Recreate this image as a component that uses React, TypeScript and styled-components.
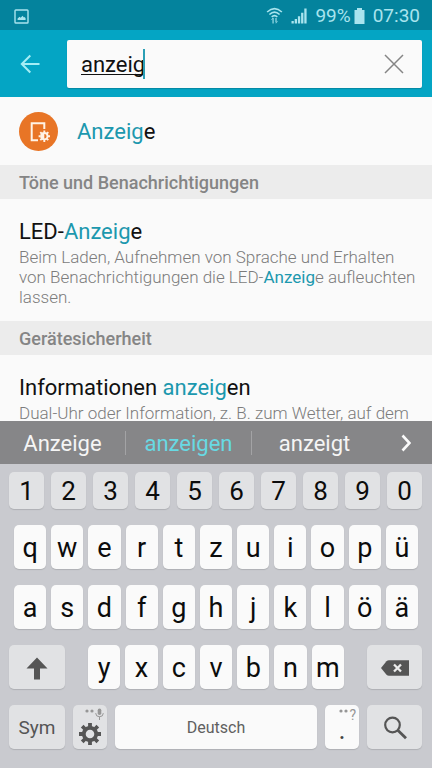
import React, { useRef, useState } from "react";
import styled, { createGlobalStyle, css } from "styled-components";

const GlobalStyle = createGlobalStyle`
  *, *::before, *::after { box-sizing: border-box; }
  body {
    margin: 0;
    background: #fafafa;
    font-family: Roboto, "Noto Sans", sans-serif;
  }
  button, input { font: inherit; color: inherit; }
`;

const Screen = styled.div`
  display: flex;
  flex-direction: column;
  height: 100vh;
  overflow: hidden;
`;

const StatusBar = styled.header`
  flex: none;
  display: flex;
  align-items: center;
  height: 30px;
  padding: 2px 12px 0 14px;
  background: #04839d;
  color: #a9e4ee;
  font-size: 19px;
  line-height: 28px;
  svg { display: block; }
`;

const StatusItems = styled.div`
  display: flex;
  align-items: center;
  gap: 8px;
  margin-left: auto;
`;

const Battery = styled.span`
  display: flex;
  align-items: center;
  gap: 3px;
`;

const Toolbar = styled.form`
  flex: none;
  display: flex;
  align-items: center;
  height: 67px;
  padding: 0 10px 0 0;
  background: #04a5c4;
`;

const IconButton = styled.button<{ $width: number }>`
  flex: none;
  display: flex;
  align-items: center;
  justify-content: center;
  width: ${(p) => p.$width}px;
  height: 43px;
  padding: 0;
  border: 0;
  background: none;
  cursor: pointer;
`;

const BackButton = styled(IconButton)`
  padding-right: 8px;
`;

const SearchField = styled.label`
  flex: 1;
  min-width: 0;
  display: flex;
  align-items: center;
  height: 48px;
  padding-left: 14px;
  border-radius: 2px;
  background: #fafafa;
  box-shadow: 0 1px 1px #0488a2;
  cursor: text;
`;

const SearchInput = styled.input`
  field-sizing: content;
  min-width: 1px;
  max-width: 280px;
  height: 32px;
  padding: 2px 0 0;
  border: 0;
  outline: 0;
  background: none;
  color: #111;
  caret-color: transparent;
  font-size: 22px;
  text-decoration: underline;
  text-decoration-thickness: 1px;
  text-underline-offset: 2px;
  text-decoration-skip-ink: none;
`;

const Caret = styled.span`
  flex: none;
  width: 2px;
  height: 30px;
  margin-left: -2px;
  background: #2b9fb5;
`;

const ClearSlot = styled.span`
  margin-left: auto;
`;

const Results = styled.main`
  flex: 1;
  min-height: 0;
  overflow: hidden;
  background: #fafafa;
`;

const CategoryRow = styled.a`
  display: flex;
  align-items: center;
  gap: 19px;
  height: 68px;
  padding: 0 19px;
  color: #111;
  font-size: 22px;
  text-decoration: none;
`;

const SectionTitle = styled.h2`
  margin: 0;
  height: 34px;
  padding: 0 19px;
  background: #ececec;
  color: #858585;
  font-size: 18px;
  font-weight: 500;
  line-height: 35px;
`;

const SettingRow = styled.a`
  display: block;
  padding: 17px 12px 14px 19px;
  color: #111;
  text-decoration: none;
`;

const SettingName = styled.span`
  display: block;
  font-size: 22px;
  line-height: 31px;
`;

const SettingText = styled.span`
  display: block;
  color: #7c7c7c;
  font-size: 17px;
  font-weight: 300;
  line-height: 20px;
`;

const Hit = styled.mark`
  background: none;
  color: #1c98ae;
  ${SettingText} & { font-weight: 400; }
`;

const Suggestions = styled.div`
  flex: none;
  display: flex;
  align-items: center;
  height: 43px;
  background: #868688;
`;

const Suggestion = styled.button<{ $active?: boolean }>`
  flex: 1;
  height: 24px;
  padding: 2px 0 0;
  border: 0;
  border-left: 1px solid #a3a3a5;
  background: none;
  color: ${(p) => (p.$active ? "#68d9e3" : "#f5f5f5")};
  font-size: 22px;
  line-height: 22px;
  cursor: pointer;
  &:first-child { border-left: 0; }
`;

const Keyboard = styled.section`
  flex: none;
  display: flex;
  flex-direction: column;
  gap: 16px;
  padding: 8px 10px 19px 9px;
  background: #c9cacf;
`;

const NumberRow = styled.div`
  display: grid;
  grid-template-columns: repeat(10, 1fr);
  gap: 7px;
`;

const LetterRow = styled.div`
  display: grid;
  grid-template-columns: repeat(11, 1fr);
  gap: 5px;
  padding: 0 4px 0 5px;
`;

const ShiftRow = styled.div`
  display: grid;
  grid-template-columns: 56px 1fr 55px;
  gap: 23px;
`;

const ShiftLetters = styled.div`
  display: grid;
  grid-template-columns: repeat(7, 1fr);
  gap: 5px;
`;

const BottomRow = styled.div`
  display: grid;
  grid-template-columns: 56px 34px 1fr 34px 55px;
  gap: 8px;
`;

const Key = styled.button<{ $kind?: "letter" | "number" | "function" | "label" }>`
  display: flex;
  align-items: center;
  justify-content: center;
  height: 44px;
  min-width: 0;
  padding: 2px 0 0;
  border: 0;
  border-radius: 5px;
  background: #fafafa;
  box-shadow: 0 1px 1px #afb0b4;
  color: #0c0c0c;
  font-size: 27px;
  line-height: 32px;
  cursor: pointer;
  ${(p) => p.$kind === "number" && css`
    height: 37px;
    padding: 0;
    background: #e1e2e4;
    font-size: 26px;
  `}
  ${(p) => p.$kind === "function" && css`
    background: #e1e2e4;
    color: #555;
    font-size: 19px;
  `}
  ${(p) => p.$kind === "label" && css`
    color: #606060;
    font-size: 16px;
  `}
`;

const CornerKey = styled(Key)`
  flex-direction: column;
  justify-content: space-between;
  align-items: stretch;
  padding: 3px 3px 4px;
  svg { display: block; }
`;

const CornerHint = styled.span`
  display: flex;
  justify-content: flex-end;
  gap: 1px;
  height: 13px;
  color: #969696;
  font-size: 14px;
  line-height: 15px;
`;

const CornerMain = styled.span`
  display: flex;
  justify-content: center;
  color: #444;
`;

const CornerSign = styled(CornerMain)`
  padding-bottom: 6px;
  font-size: 27px;
  line-height: 18px;
`;

const ArrowLeft = () => (
  <svg width="20" height="20" viewBox="0 0 20 20" fill="none" stroke="#a5edf5" strokeWidth="2">
    <path d="M19.5 10H2M10.3 1.5L1.8 10l8.5 8.5" />
  </svg>
);

const Cross = () => (
  <svg width="20" height="20" viewBox="0 0 20 20" fill="none" stroke="#858585" strokeWidth="1.5">
    <path d="M1 1l18 18M19 1L1 19" />
  </svg>
);

const PictureIcon = () => (
  <svg width="15" height="15" viewBox="0 0 15 15">
    <rect x="1" y="1" width="13" height="13" rx="0.8" fill="none" stroke="#a9e4ee" strokeWidth="1.4" />
    <path d="M3.6 11V9.4l2-1.6 1 .9 2-2 1.3 1.8.8-.5.9 1.2V11z" fill="#a9e4ee" />
  </svg>
);

const WifiIcon = () => (
  <svg width="17" height="18" viewBox="0 0 18 18" fill="none" stroke="#a9e4ee" strokeWidth="1.7">
    <path d="M1.2 4.8Q9-2.4 16.8 4.8M3.6 7.4Q9 2.4 14.4 7.4M6 10Q9 7.3 12 10" />
    <path d="M7.5 11v6M10.6 11v5" strokeWidth="1.8" opacity="0.65" />
    <path d="M5.7 13.2l1.8-2.2M12.3 14.2L10.6 16.8" strokeWidth="1" opacity="0.65" />
  </svg>
);

const SignalIcon = () => (
  <svg width="16" height="16" viewBox="0 0 16 16" fill="#a9e4ee">
    <path d="M0.5 13h2.3v2.5h-2.3zM3.7 11h2.3v4.500h-2.300zM6.900 8.200h2.300v7.300h-2.300zM10.100 4.700h2.300v10.800h-2.300zM13.300 0.500h2.300v15h-2.300z" />
  </svg>
);

const BatteryIcon = () => (
  <svg width="11" height="16" viewBox="0 0 11 16" fill="#a9e4ee">
    <path d="M3 0h5v2h2.500v14H0.500V2H3z" />
  </svg>
);

const DisplayIcon = () => (
  <svg width="39" height="39" viewBox="0 0 39 39">
    <circle cx="19.500" cy="19.500" r="19.500" fill="#e87526" />
    <path d="M25.300 17V11.200H12.700V28.300H19" fill="none" stroke="#fff3e6" strokeWidth="2" />
    <g fill="none" stroke="#fff3e6">
      <circle cx="25.300" cy="24.200" r="3.200" strokeWidth="1.800" />
      <path
        d="M25.300 18.500v2M25.300 28v2M19.600 24.200h2M29 24.200h2M21.300 20.200l1.400 1.400M27.900 26.800l1.400 1.400M21.300 28.200l1.400-1.400M27.900 21.600l1.400-1.400"
        strokeWidth="1.900"
      />
    </g>
    <path d="M25.300 21v6.400a3.200 3.200 0 0 1 0-6.400z" fill="#fff3e6" />
  </svg>
);

const ChevronRight = () => (
  <svg width="12" height="18" viewBox="0 0 12 18" fill="none" stroke="#fafafa" strokeWidth="2.600">
    <path d="M3.500 1.500L10.500 9l-7 7.500" />
  </svg>
);

const ShiftIcon = () => (
  <svg width="22" height="23" viewBox="0 0 22 23" fill="#555">
    <path d="M11 0.500L21.500 11.500H14V22.500H8V11.500H0.500z" />
  </svg>
);

const BackspaceIcon = () => (
  <svg width="28" height="16" viewBox="0 0 28 16">
    <path d="M0 8L5.500 1.300Q6.500 0.300 8 0.300H28V15.700H8Q6.500 15.700 5.500 14.700z" fill="#555" />
    <path d="M13 4.500l7 7M20 4.500l-7 7" stroke="#ececec" strokeWidth="2.300" fill="none" />
  </svg>
);

const GearIcon = () => (
  <svg width="22" height="22" viewBox="0 0 22 22">
    <g fill="none" stroke="#555">
      <circle cx="11" cy="11" r="6.200" strokeWidth="3.800" />
      <path
        d="M11 0v4M11 18v4M0 11h4M18 11h4M3.200 3.200L6 6M16 16l2.800 2.800M3.200 18.800L6 16M16 6l2.800-2.800"
        strokeWidth="3.800"
      />
    </g>
  </svg>
);

const DotsIcon = () => (
  <svg width="9" height="6" viewBox="0 0 9 6" fill="#969696">
    <circle cx="2" cy="3" r="1.600" />
    <circle cx="7" cy="3" r="1.600" />
  </svg>
);

const MicIcon = () => (
  <svg width="9" height="12" viewBox="0 0 9 12" fill="none" stroke="#969696">
    <rect x="2.700" y="0.500" width="3.600" height="6.500" rx="1.800" fill="#969696" stroke="none" />
    <path d="M0.800 5v.5a3.700 3.200 0 0 0 7.400 0V5M4.500 8.700V12" />
  </svg>
);

const SearchIcon = () => (
  <svg width="24" height="24" viewBox="0 0 24 24" fill="none" stroke="#555">
    <circle cx="9.500" cy="9" r="7.300" strokeWidth="2.200" />
    <path d="M14.800 14.300L23 22.300" strokeWidth="2.800" />
  </svg>
);

const HINTS = ["Anzeige", "anzeigen", "anzeigt"];

export default function App() {
  const [query, setQuery] = useState("anzeig");
  const inputRef = useRef<HTMLInputElement>(null);
  const type = (text: string) => setQuery((q) => q + text);
  const letters = (chars: string) =>
    chars.split("").map((c) => (
      <Key key={c} type="button" onClick={() => type(c)}>{c}</Key>
    ));

  return (
    <Screen>
      <GlobalStyle />
      <StatusBar>
        <PictureIcon />
        <StatusItems>
          <WifiIcon />
          <SignalIcon />
          <Battery>99%<BatteryIcon /></Battery>
          <time>07:30</time>
        </StatusItems>
      </StatusBar>

      <Toolbar role="search" onSubmit={(e) => e.preventDefault()}>
        <BackButton $width={67} type="button" aria-label="Zurück"><ArrowLeft /></BackButton>
        <SearchField>
          <SearchInput
            ref={inputRef}
            aria-label="Suchen"
            value={query}
            spellCheck={false}
            onChange={(e) => setQuery(e.target.value)}
          />
          <Caret />
          <ClearSlot>
            <IconButton $width={57} type="button" aria-label="Löschen" onClick={() => setQuery("")}>
              <Cross />
            </IconButton>
          </ClearSlot>
        </SearchField>
      </Toolbar>

      <Results>
        <CategoryRow href="#anzeige">
          <DisplayIcon />
          <span><Hit>Anzeig</Hit>e</span>
        </CategoryRow>
        <SectionTitle>Töne und Benachrichtigungen</SectionTitle>
        <SettingRow href="#led">
          <SettingName>LED-<Hit>Anzeig</Hit>e</SettingName>
          <SettingText>
            Beim Laden, Aufnehmen von Sprache und Erhalten von Benachrichtigungen die
            LED-<Hit>Anzeig</Hit>e aufleuchten lassen.
          </SettingText>
        </SettingRow>
        <SectionTitle>Gerätesicherheit</SectionTitle>
        <SettingRow href="#informationen">
          <SettingName>Informationen <Hit>anzeig</Hit>en</SettingName>
          <SettingText>Dual-Uhr oder Information, z. B. zum Wetter, auf dem</SettingText>
        </SettingRow>
      </Results>

      <Suggestions>
        {HINTS.map((hint) => (
          <Suggestion key={hint} type="button" $active={hint === "anzeigen"} onClick={() => setQuery(hint)}>
            {hint}
          </Suggestion>
        ))}
        <IconButton $width={55} type="button" aria-label="Weitere Vorschläge"><ChevronRight /></IconButton>
      </Suggestions>

      <Keyboard aria-label="Tastatur">
        <NumberRow>
          {"1234567890".split("").map((n) => (
            <Key key={n} $kind="number" type="button" onClick={() => type(n)}>{n}</Key>
          ))}
        </NumberRow>
        <LetterRow>{letters("qwertzuiopü")}</LetterRow>
        <LetterRow>{letters("asdfghjklöä")}</LetterRow>
        <ShiftRow>
          <Key $kind="function" type="button" aria-label="Umschalten"><ShiftIcon /></Key>
          <ShiftLetters>{letters("yxcvbnm")}</ShiftLetters>
          <Key
            $kind="function"
            type="button"
            aria-label="Rücktaste"
            onClick={() => setQuery((q) => q.slice(0, -1))}
          >
            <BackspaceIcon />
          </Key>
        </ShiftRow>
        <BottomRow>
          <Key $kind="function" type="button">Sym</Key>
          <CornerKey $kind="function" type="button" aria-label="Einstellungen">
            <CornerHint><DotsIcon /><MicIcon /></CornerHint>
            <CornerMain><GearIcon /></CornerMain>
          </CornerKey>
          <Key $kind="label" type="button" onClick={() => type(" ")}>Deutsch</Key>
          <CornerKey type="button" onClick={() => type(".")}>
            <CornerHint><DotsIcon />?</CornerHint>
            <CornerSign>.</CornerSign>
          </CornerKey>
          <Key
            $kind="function"
            type="button"
            aria-label="Suchen"
            onClick={() => inputRef.current?.focus()}
          >
            <SearchIcon />
          </Key>
        </BottomRow>
      </Keyboard>
    </Screen>
  );
}
